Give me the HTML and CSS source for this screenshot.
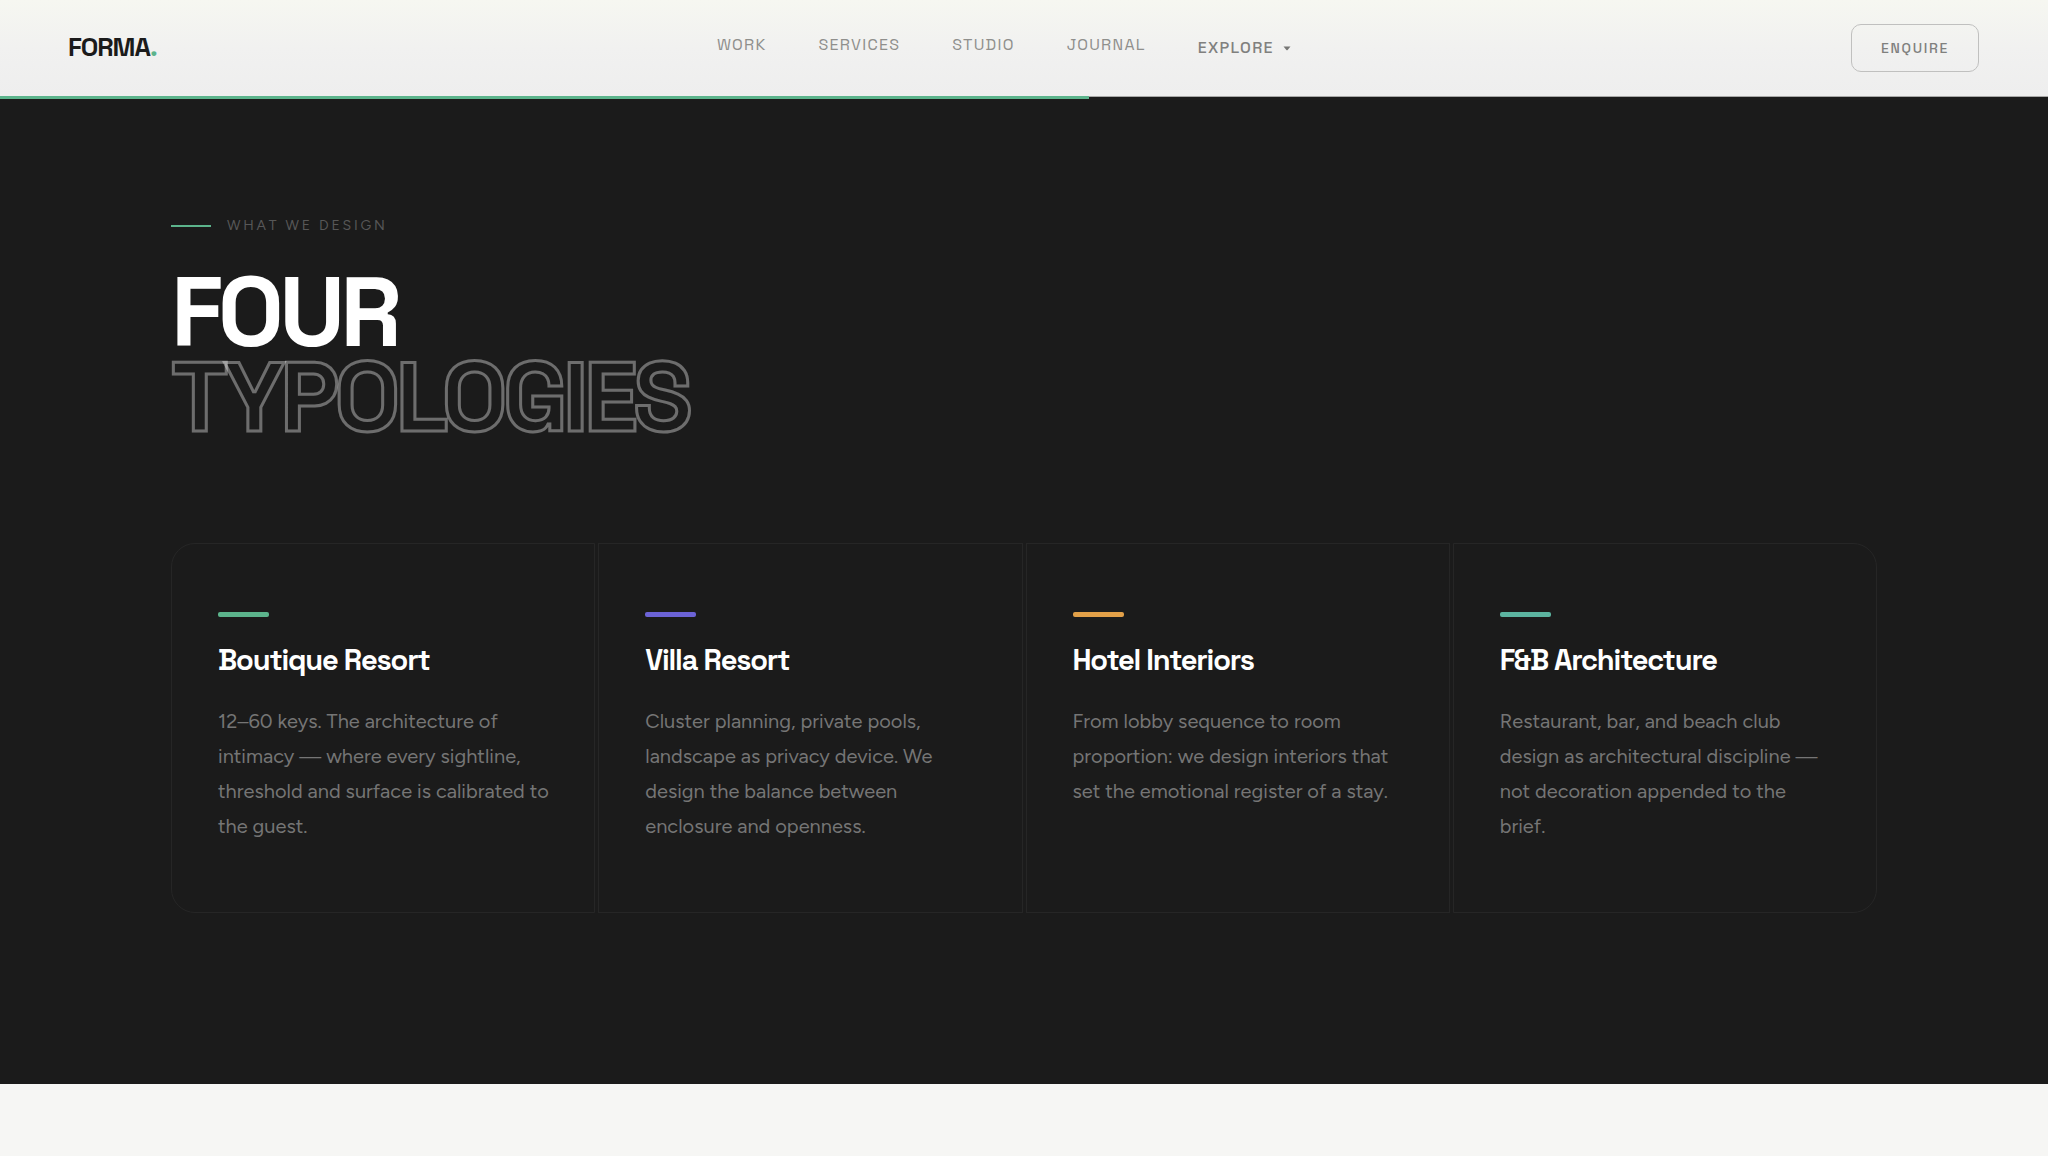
FILE: index.html
```html
<!DOCTYPE html>
<html lang="en">
<head>
<meta charset="utf-8">
<meta name="viewport" content="width=device-width, initial-scale=1">
<title>FORMA. Four Typologies</title>
<link rel="stylesheet" href="styles.css">
</head>
<body>
<header class="header">
  <a class="logo" href="#">FORMA<span class="logo-dot">.</span></a>
  <nav class="nav" aria-label="Main">
    <a class="nav-link" href="#">Work</a>
    <a class="nav-link" href="#">Services</a>
    <a class="nav-link" href="#">Studio</a>
    <a class="nav-link" href="#">Journal</a>
    <button class="nav-more" type="button">Explore
      <svg class="caret" viewBox="0 0 8 5" aria-hidden="true"><path d="M0.5 0.5h7L4.6 4q-.6.6-1.2 0z"/></svg>
    </button>
  </nav>
  <button class="enquire" type="button">Enquire</button>
  <div class="progress" style="width: 53.15%"></div>
</header>
<main>
  <section class="typologies">
    <div class="container">
      <p class="eyebrow">What we design</p>
      <h1 class="title">Four<span class="title-outline">Typologies</span></h1>
      <div class="cards">
        <article class="card card-green">
          <h2 class="card-title">Boutique Resort</h2>
          <p class="card-text">12–60 keys. The architecture of intimacy — where every sightline, threshold and surface is calibrated to the guest.</p>
        </article>
        <article class="card card-violet">
          <h2 class="card-title">Villa Resort</h2>
          <p class="card-text">Cluster planning, private pools, landscape as privacy device. We design the balance between enclosure and openness.</p>
        </article>
        <article class="card card-amber">
          <h2 class="card-title">Hotel Interiors</h2>
          <p class="card-text">From lobby sequence to room proportion: we design interiors that set the emotional register of a stay.</p>
        </article>
        <article class="card card-teal">
          <h2 class="card-title">F&amp;B Architecture</h2>
          <p class="card-text">Restaurant, bar, and beach club design as architectural discipline — not decoration appended to the brief.</p>
        </article>
      </div>
    </div>
  </section>
</main>
</body>
</html>
```
FILE: styles.css
```css
:root {
  --green: #5cb48c;
  --ink: #1b1b1b;
  --line: #262626;
  --display: "Space Grotesk", Roboto, sans-serif;
  --text: Figtree, Lato, sans-serif;
}

* {
  box-sizing: border-box;
}

body {
  margin: 0;
  background: #f6f6f4;
  color: var(--ink);
  font-family: var(--text);
}

h1, h2, p {
  margin: 0;
}

button {
  background: none;
  border: 0;
  padding: 0;
  font-family: var(--display);
  text-transform: uppercase;
  cursor: pointer;
}

/* Header */
.header {
  position: relative;
  display: flex;
  align-items: center;
  justify-content: space-between;
  min-height: 97px;
  padding: 24px 69px 24px 68px;
  background: linear-gradient(#f6f7f1, #f1f1f0 50%, #eeeeee);
  border-bottom: 1px solid #a8a8a7;
}

.logo {
  padding-bottom: 2px;
  color: var(--ink);
  font: 700 26px/32px var(--display);
  letter-spacing: -0.04em;
  text-decoration: none;
}

.logo-dot {
  color: var(--green);
}

.nav {
  display: flex;
  align-items: center;
  gap: 52px;
}

.nav-link {
  padding-bottom: 6px;
  color: #8f8f8c;
  font: 400 16px/20px var(--display);
  letter-spacing: 0.08em;
  text-decoration: none;
  text-transform: uppercase;
}

.nav-more {
  display: flex;
  align-items: center;
  gap: 9px;
  color: #80807e;
  font-size: 16px;
  font-weight: 500;
  line-height: 20px;
  letter-spacing: 0.08em;
}

.caret {
  width: 8px;
  height: 5px;
  fill: #777775;
}

.enquire {
  padding: 13px 29px;
  border: 1px solid #c0c0bf;
  border-radius: 10px;
  color: #80807e;
  font-size: 14px;
  font-weight: 500;
  line-height: 20px;
  letter-spacing: 0.12em;
}

.progress {
  position: absolute;
  left: 0;
  bottom: -3px;
  height: 3px;
  background: var(--green);
}

/* Typologies */
.typologies {
  padding: 119px 24px 171px;
  background: var(--ink);
}

.container {
  max-width: 1706px;
  margin: 0 auto;
}

.eyebrow {
  display: flex;
  align-items: center;
  gap: 16px;
  margin-bottom: 35px;
  color: #575757;
  font-size: 14px;
  line-height: 19px;
  letter-spacing: 0.2em;
  text-transform: uppercase;
}

.eyebrow::before {
  content: "";
  width: 40px;
  height: 2px;
  background: var(--green);
}

.title {
  margin-bottom: 103px;
  color: #fff;
  font: 700 98px/85px var(--display);
  letter-spacing: -0.05em;
  text-transform: uppercase;
}

.title-outline {
  display: block;
  color: transparent;
  -webkit-text-stroke: 3px rgba(255, 255, 255, 0.36);
}

.cards {
  display: grid;
  grid-template-columns: repeat(4, 1fr);
  gap: 3px;
}

.card {
  padding: 68px 40px 68px 46px;
  border: 1px solid var(--line);
}

.card:first-child {
  border-radius: 24px 0 0 24px;
}

.card:last-child {
  border-radius: 0 24px 24px 0;
}

.card::before {
  content: "";
  display: block;
  width: 51px;
  height: 5px;
  margin-bottom: 24px;
  border-radius: 2px;
  background: var(--accent);
}

.card-green { --accent: #5cb48c; }
.card-violet { --accent: #6c63d6; }
.card-amber { --accent: #e2a048; }
.card-teal { --accent: #5cb4a0; }

.card-title {
  margin-bottom: 25px;
  color: #fff;
  font: 700 29px/38px var(--display);
  letter-spacing: -0.04em;
}

.card-text {
  color: #757575;
  font-size: 20px;
  line-height: 35px;
}

@media (max-width: 1200px) {
  .cards { grid-template-columns: repeat(2, 1fr); }
  .nav { gap: 24px; }
}
```
